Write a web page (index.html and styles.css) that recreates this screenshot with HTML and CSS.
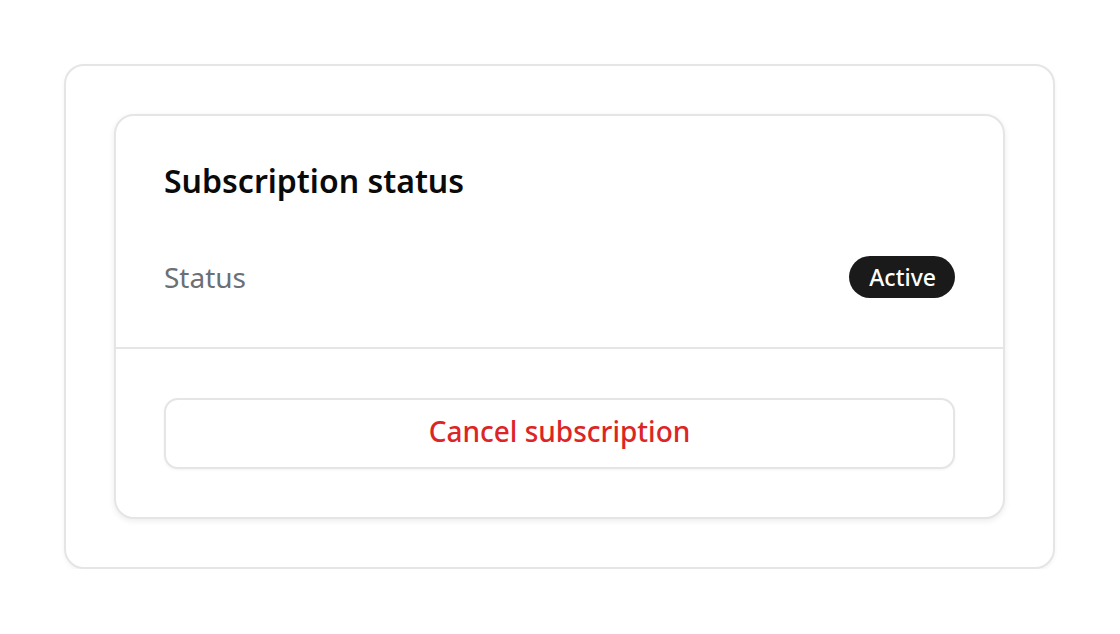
FILE: index.html
```html
<!DOCTYPE html>
<html lang="en">
<head>
    <meta charset="UTF-8">
    <meta name="viewport" content="width=device-width, initial-scale=1.0">
    <title>Subscription</title>
    <link rel="stylesheet" href="styles.css">
</head>
<body>
    <div class="frame">
        <div class="card">
            <div class="card-body">
                <h2 class="card-title">Subscription status</h2>
                <div class="row">
                    <span class="label">Status</span>
                    <span class="badge">Active</span>
                </div>
            </div>
            <div class="card-footer">
                <button class="cancel-button">Cancel subscription</button>
            </div>
        </div>
    </div>
</body>
</html>
```

FILE: styles.css
```css
body {
    margin: 0;
    background: #fff;
    font-family: "Noto Sans", "Open Sans", sans-serif;
}
.frame {
    margin: 64px 65px 0 64px;
    width: 991px;
    box-sizing: border-box;
    padding: 48px;
    border: 2px solid #e5e5e5;
    border-radius: 20px;
    background: #fff;
    box-shadow: 0 2px 4px rgba(0, 0, 0, 0.05);
}
.card {
    border: 2px solid #e5e5e5;
    border-radius: 20px;
    background: #fff;
    box-shadow: 0 2px 6px rgba(0, 0, 0, 0.08);
}
.card-body {
    padding: 45px 48px 49px 48px;
    border-bottom: 2px solid #e5e5e5;
}
.card-title {
    margin: 0;
    font-size: 32px;
    line-height: 40px;
    font-weight: 600;
    color: #0a0a0a;
}
.row {
    display: flex;
    justify-content: space-between;
    align-items: center;
    margin-top: 55px;
}
.label {
    font-size: 28px;
    color: #6b6f76;
}
.badge {
    background: #1a1a1a;
    color: #fff;
    font-size: 23px;
    font-weight: 500;
    height: 42px;
    line-height: 42px;
    padding: 0 19px 0 20px;
    border-radius: 21px;
}
.card-footer {
    padding: 49px 48px 48px 48px;
}
.cancel-button {
    display: block;
    width: 100%;
    height: 71px;
    padding: 0 0 5px 0;
    background: #fff;
    border: 2px solid #e5e5e5;
    border-radius: 14px;
    box-shadow: 0 1px 3px rgba(0, 0, 0, 0.05);
    font-family: inherit;
    font-size: 28px;
    font-weight: 500;
    color: #dc2626;
}
```
